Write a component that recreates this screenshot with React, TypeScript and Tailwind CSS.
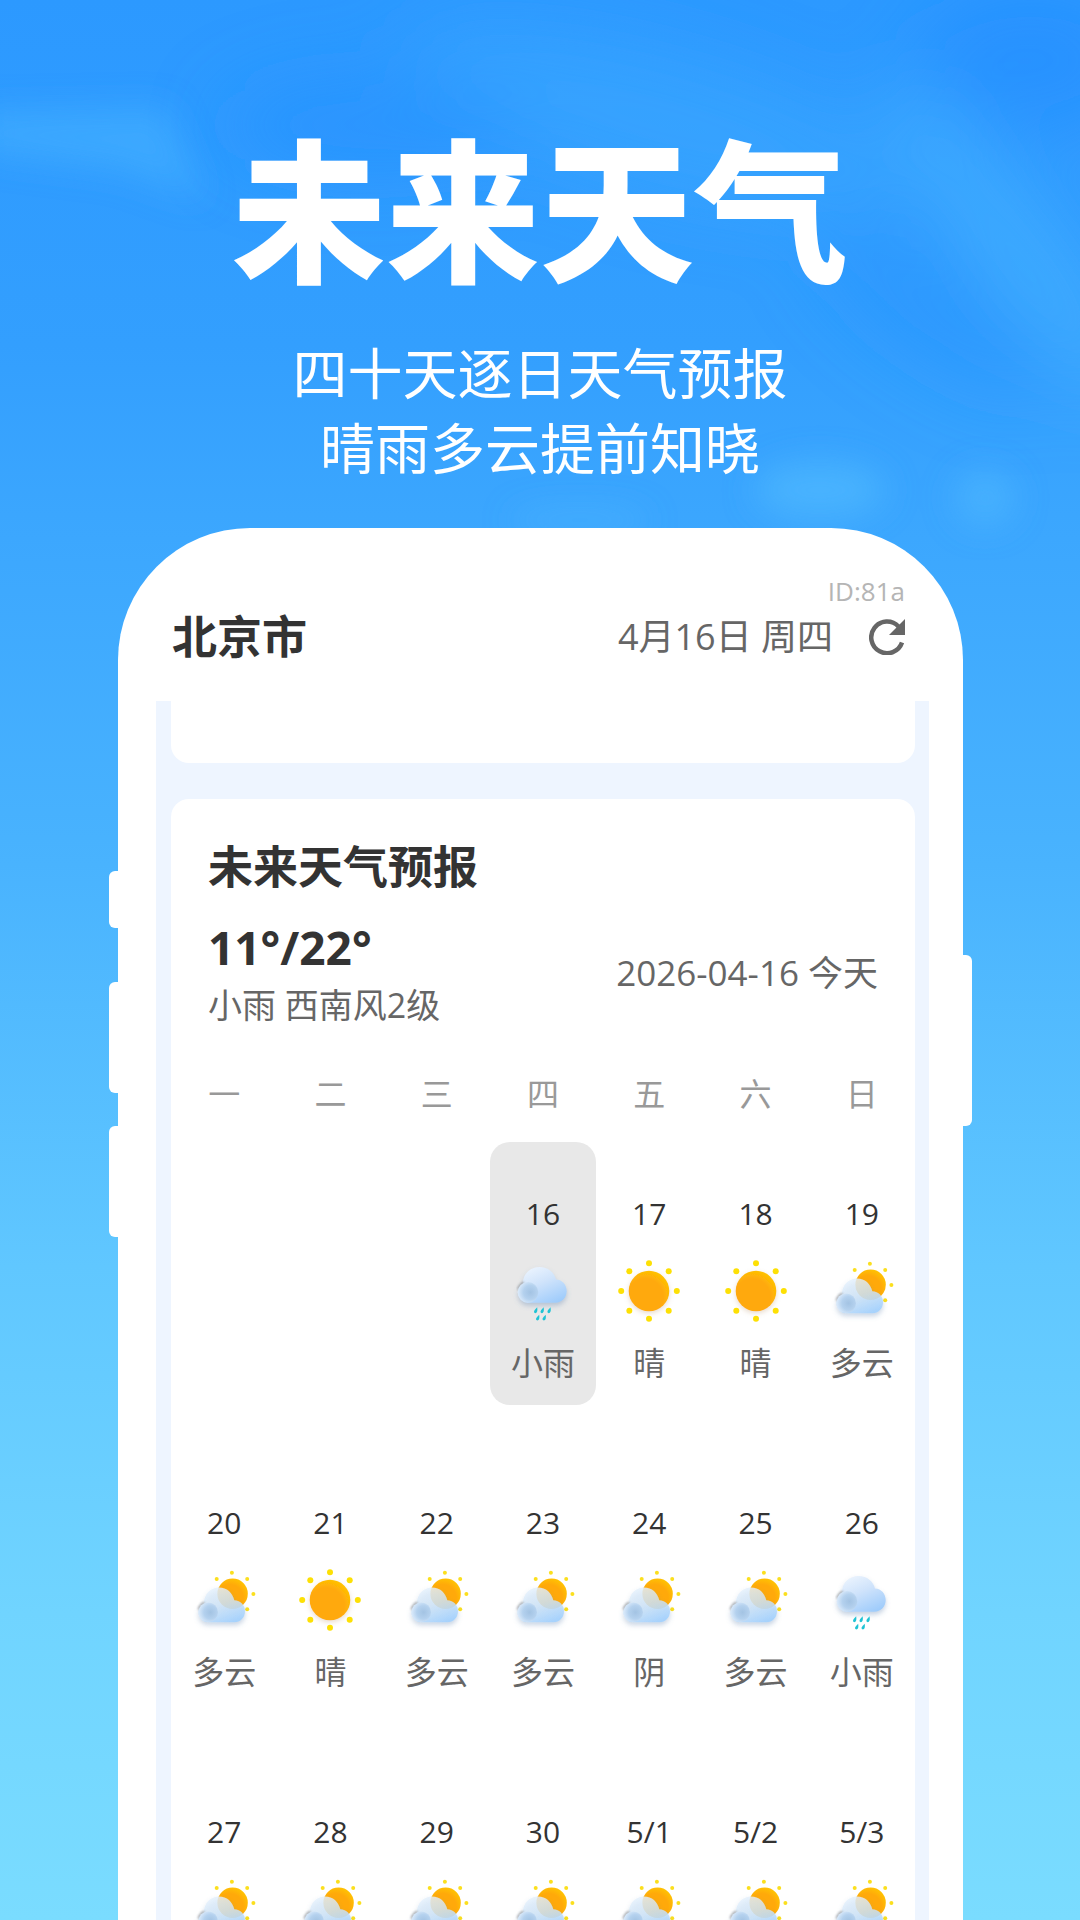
import clsx from "clsx";

type Weather = "rain" | "sunny" | "cloudy";

type Day = {
  date: string;
  weather: Weather;
  label?: string;
  selected?: boolean;
};

const WEEKDAYS = ["一", "二", "三", "四", "五", "六", "日"];

const WEEKS: (Day | null)[][] = [
  [
    null,
    null,
    null,
    { date: "16", weather: "rain", label: "小雨", selected: true },
    { date: "17", weather: "sunny", label: "晴" },
    { date: "18", weather: "sunny", label: "晴" },
    { date: "19", weather: "cloudy", label: "多云" },
  ],
  [
    { date: "20", weather: "cloudy", label: "多云" },
    { date: "21", weather: "sunny", label: "晴" },
    { date: "22", weather: "cloudy", label: "多云" },
    { date: "23", weather: "cloudy", label: "多云" },
    { date: "24", weather: "cloudy", label: "阴" },
    { date: "25", weather: "cloudy", label: "多云" },
    { date: "26", weather: "rain", label: "小雨" },
  ],
  [
    { date: "27", weather: "cloudy" },
    { date: "28", weather: "cloudy" },
    { date: "29", weather: "cloudy" },
    { date: "30", weather: "cloudy" },
    { date: "5/1", weather: "cloudy" },
    { date: "5/2", weather: "cloudy" },
    { date: "5/3", weather: "cloudy" },
  ],
];

// Gradients and filters shared by every weather icon
function IconDefs() {
  return (
    <svg className="absolute size-0" aria-hidden="true">
      <defs>
        <radialGradient id="sun" cx="0.4" cy="0.65" r="0.75">
          <stop offset="0.6" stopColor="#ffa90a" />
          <stop offset="1" stopColor="#ffcb00" />
        </radialGradient>
        <linearGradient id="cloud" x1="0.2" y1="0" x2="0.8" y2="1">
          <stop offset="0" stopColor="#edf5fe" />
          <stop offset="0.45" stopColor="#cfe3fb" />
          <stop offset="1" stopColor="#9dcbfb" />
        </linearGradient>
        <linearGradient id="haze" x1="0.2" y1="0" x2="0.7" y2="1">
          <stop offset="0" stopColor="#e8f3fd" stopOpacity="0.82" />
          <stop offset="0.5" stopColor="#d0e5f8" stopOpacity="0.82" />
          <stop offset="1" stopColor="#a6d2fd" stopOpacity="0.96" />
        </linearGradient>
        <radialGradient id="puff" cx="0.62" cy="0.5" r="0.62">
          <stop offset="0" stopColor="#a3c3e3" />
          <stop offset="0.55" stopColor="#b4d1ee" />
          <stop offset="1" stopColor="#dcebfb" />
        </radialGradient>
        <filter id="soft" x="-30%" y="-30%" width="160%" height="180%">
          <feDropShadow dx="0" dy="3" stdDeviation="2.5" floodColor="#5b7fae" floodOpacity="0.35" />
        </filter>
        <filter id="glow" x="-30%" y="-30%" width="160%" height="160%">
          <feDropShadow dx="0" dy="2" stdDeviation="2.5" floodColor="#b58a5a" floodOpacity="0.3" />
        </filter>
        <filter id="edge" x="-30%" y="-30%" width="160%" height="160%">
          <feGaussianBlur stdDeviation="0.8" />
        </filter>
      </defs>
    </svg>
  );
}

function RainIcon() {
  return (
    <svg viewBox="0 0 64 64" className="size-16" aria-hidden="true">
      <path
        d="M17 43.7A10.5 10.5 0 0 1 12 24.2C12 14.5 19.600 8 28.500 8C37 8 43.500 13.500 45 20.600C51.500 21 55.700 26 55.700 32C55.700 38.800 50.500 43.700 44.500 43.700Z"
        fill="url(#cloud)"
        filter="url(#soft)"
      />
      <path d="M7 30.500C8 27 10 24.600 13 23.600" fill="none" stroke="#7d8288" strokeWidth="1.800" opacity="0.75" filter="url(#edge)" />
      <circle cx="17" cy="33.400" r="10.300" fill="url(#puff)" />
      <g fill="#1fc3d4">
        <path d="M26.200 48.300Q27 54 24.300 54.200Q20.900 53.400 26.200 48.300Z" />
        <path d="M32.700 48.300Q33.500 54 30.800 54.200Q27.400 53.400 32.700 48.300Z" />
        <path d="M39.600 48.300Q40.400 54 37.700 54.200Q34.300 53.400 39.600 48.300Z" />
        <path d="M28.200 55.700Q29 61.200 26.300 61.400Q22.900 60.600 28.200 55.700Z" />
        <path d="M34.700 55.700Q35.500 61.200 32.800 61.400Q29.400 60.600 34.700 55.700Z" />
      </g>
    </svg>
  );
}

function SunnyIcon() {
  return (
    <svg viewBox="0 0 64 64" className="size-16" aria-hidden="true">
      <circle cx="32" cy="32" r="20.300" fill="url(#sun)" filter="url(#glow)" />
      <g fill="#fde004">
        <circle cx="32" cy="4.200" r="3" />
        <circle cx="51.700" cy="12.300" r="3" />
        <circle cx="59.800" cy="32" r="3" />
        <circle cx="51.700" cy="51.700" r="3" />
        <circle cx="32" cy="59.800" r="3" />
        <circle cx="12.300" cy="51.700" r="3" />
        <circle cx="4.200" cy="32" r="3" />
        <circle cx="12.300" cy="12.300" r="3" />
      </g>
    </svg>
  );
}

function CloudyIcon() {
  return (
    <svg viewBox="0 0 64 64" className="size-16" aria-hidden="true">
      <circle cx="40.600" cy="25.700" r="15.200" fill="url(#sun)" />
      <g fill="#fbdf1e">
        <circle cx="39.900" cy="4.700" r="2" />
        <circle cx="24.700" cy="11" r="2" />
        <circle cx="55.200" cy="11" r="2" />
        <circle cx="61.400" cy="26" r="2" />
        <circle cx="55.200" cy="41.300" r="2" />
      </g>
      <path
        d="M16 54.200A10 10 0 0 1 11.800 35.200C12.500 26 18.500 19.600 27 19.600C35 19.600 40.600 25 42.300 32.300C48.700 32.300 53 37.400 53 43.200C53 49.500 48.500 54.200 42.500 54.200Z"
        fill="url(#haze)"
        filter="url(#soft)"
      />
      <path d="M6.500 41.500C7.500 38 9.500 35.600 12.500 34.600" fill="none" stroke="#7d8288" strokeWidth="1.800" opacity="0.75" filter="url(#edge)" />
      <circle cx="16.200" cy="44.300" r="9.800" fill="url(#puff)" />
    </svg>
  );
}

function RefreshIcon() {
  return (
    <svg viewBox="0 0 36 36" className="size-9" aria-hidden="true">
      <path d="M33 23.500A15.800 15.800 0 1 1 29.500 7.500" fill="none" stroke="#666" strokeWidth="4.500" />
      <path d="M36 0V16H20Z" fill="#666" />
    </svg>
  );
}

const ICONS = { rain: RainIcon, sunny: SunnyIcon, cloudy: CloudyIcon };

function DayCell({ date, weather, label, selected }: Day) {
  const Icon = ICONS[weather];

  return (
    <button
      type="button"
      aria-pressed={Boolean(selected)}
      className={clsx(
        "flex h-[263px] w-full flex-col items-center rounded-[20px] pt-13",
        selected && "bg-[#e8e8e8]",
      )}
    >
      <span className="text-[30px] leading-10 text-[#333]">{date}</span>
      <span className="mt-[25px]">
        <Icon />
      </span>
      {label && <span className="mt-5 text-[32px] leading-10 text-[#666]">{label}</span>}
    </button>
  );
}

// Faint clouds drifting over the blue
function Sky() {
  return (
    <svg
      viewBox="0 0 1080 1920"
      preserveAspectRatio="none"
      className="absolute inset-0 size-full"
      aria-hidden="true"
    >
      <defs>
        <filter id="blur" x="-50%" y="-100%" width="200%" height="300%">
          <feGaussianBlur stdDeviation="36" />
        </filter>
        <filter id="wisp" x="-50%" y="-100%" width="200%" height="300%">
          <feGaussianBlur stdDeviation="16" />
        </filter>
      </defs>
      <g filter="url(#blur)">
        <ellipse cx="660" cy="120" rx="260" ry="70" fill="#3caaff" opacity="0.5" transform="rotate(15 660 120)" />
        <ellipse cx="370" cy="125" rx="150" ry="50" fill="#208dff" opacity="0.45" />
        <ellipse cx="1010" cy="240" rx="200" ry="40" fill="#48b4ff" opacity="0.6" transform="rotate(52 1010 240)" />
        <ellipse cx="930" cy="310" rx="140" ry="45" fill="#2592ff" opacity="0.45" transform="rotate(35 930 310)" />
        <ellipse cx="1030" cy="60" rx="110" ry="70" fill="#1f8cff" opacity="0.5" />
      </g>
      <g filter="url(#wisp)">
        <path d="M-20 112L165 108Q180 140 205 200L120 170L-20 152Z" fill="#43b1ff" opacity="0.6" />
        <ellipse cx="820" cy="490" rx="65" ry="28" fill="#52bcff" opacity="0.6" />
        <ellipse cx="985" cy="498" rx="30" ry="28" fill="#52bcff" opacity="0.5" />
        <ellipse cx="580" cy="520" rx="70" ry="12" fill="#52bcff" opacity="0.35" />
      </g>
    </svg>
  );
}

export default function App() {
  return (
    <main className="relative flex h-screen flex-col overflow-hidden bg-[linear-gradient(180deg,#2c99ff_0%,#339ffe_18%,#3ca7fe_28%,#49b3fe_45%,#60c7ff_66%,#70d4ff_84%,#7adcff_100%)] font-['Open_Sans','Noto_Sans_CJK_SC',sans-serif]">
      <Sky />
      <IconDefs />

      <header className="relative pt-[111px] text-center text-white">
        <h1 className="text-[154px] leading-[200px] font-black">未来天气</h1>
        <p className="mt-6 text-[55px] leading-[75px]">
          四十天逐日天气预报
          <br />
          晴雨多云提前知晓
        </p>
      </header>

      <section className="relative mt-[43px] mr-[117px] ml-[118px] flex flex-1 flex-col rounded-t-[132px] bg-white pr-[34px] pl-[38px]">
        {/* side buttons of the phone body */}
        <span className="absolute top-[343px] -left-[9px] h-[57px] w-5 rounded-l-md bg-white" />
        <span className="absolute top-[454px] -left-[9px] h-[111px] w-5 rounded-l-md bg-white" />
        <span className="absolute top-[598px] -left-[9px] h-[111px] w-5 rounded-l-md bg-white" />
        <span className="absolute top-[427px] -right-[9px] h-[171px] w-5 rounded-r-md bg-white" />

        <div className="h-[173px] pt-[47px] pr-6 pl-4 text-[#666]">
          <p className="text-right text-[26px] leading-8 text-[#b5b5b5]">ID:81a</p>
          <div className="flex items-center">
            <h2 className="flex-1 text-[45px] leading-[60px] font-bold text-[#333]">北京市</h2>
            <time className="text-[36px] leading-[60px]">4月16日 周四</time>
            <button type="button" aria-label="刷新" className="ml-9">
              <RefreshIcon />
            </button>
          </div>
        </div>

        <div className="flex-1 bg-[#eef5ff] pr-[14px] pl-[15px]">
          <div className="h-[62px] rounded-b-[18px] bg-white" />

          <article className="mt-9 rounded-t-[18px] bg-white pt-[38px]">
            <div className="px-[37px]">
              <h3 className="text-[45px] leading-[60px] font-bold text-[#333]">未来天气预报</h3>
              <div className="flex items-center justify-between">
                <div>
                  <p className="mt-5 text-[46px] leading-[60px] font-bold text-[#333]">11°/22°</p>
                  <p className="text-[34px] leading-[56px] text-[#666]">小雨 西南风2级</p>
                </div>
                <time className="mt-4 text-[35px] leading-[56px] text-[#666]">2026-04-16 今天</time>
              </div>
            </div>

            <table className="mt-[37px] w-full table-fixed border-collapse">
              <thead>
                <tr>
                  {WEEKDAYS.map((day) => (
                    <th key={day} className="h-[72px] p-0 align-top text-[32px] leading-[48px] font-normal text-[#999]">
                      {day}
                    </th>
                  ))}
                </tr>
              </thead>
              <tbody>
                {WEEKS.map((week, index) => (
                  <tr key={index}>
                    {week.map((day, column) => (
                      <td key={column} className="p-0 pb-[46px] align-top">
                        {day && <DayCell {...day} />}
                      </td>
                    ))}
                  </tr>
                ))}
              </tbody>
            </table>
          </article>
        </div>
      </section>
    </main>
  );
}
